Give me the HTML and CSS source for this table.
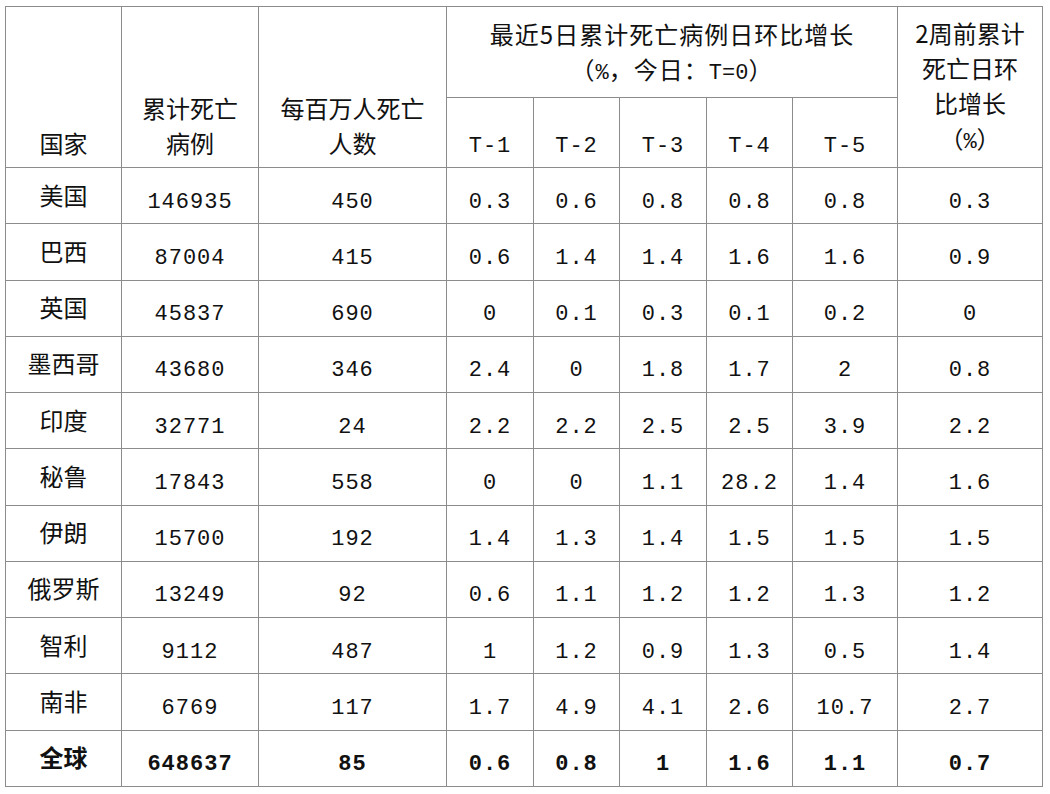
FILE: index.html
```html
<!DOCTYPE html>
<html lang="zh">
<head>
<meta charset="utf-8">
<link rel="stylesheet" href="styles.css">
</head>
<body>
<table class="deaths">
  <colgroup>
    <col class="c-country">
    <col class="c-total">
    <col class="c-permil">
    <col class="c-t1">
    <col class="c-t2">
    <col class="c-t3">
    <col class="c-t4">
    <col class="c-t5">
    <col class="c-2w">
  </colgroup>
  <thead>
    <tr class="h1">
      <th rowspan="2">国家</th>
      <th rowspan="2">累计死亡<br>病例</th>
      <th rowspan="2">每百万人死亡<br>人数</th>
      <th colspan="5" class="wide">最近5日累计死亡病例日环比增长<br>（<span class="mono">%</span>，今日：<span class="mono">T=0</span>）</th>
      <th rowspan="2">2周前累计<br>死亡日环<br>比增长<br>（<span class="mono">%</span>）</th>
    </tr>
    <tr class="h2">
      <th class="mono">T-1</th>
      <th class="mono">T-2</th>
      <th class="mono">T-3</th>
      <th class="mono">T-4</th>
      <th class="mono">T-5</th>
    </tr>
  </thead>
  <tbody>
    <tr><td class="name">美国</td><td>146935</td><td>450</td><td>0.3</td><td>0.6</td><td>0.8</td><td>0.8</td><td>0.8</td><td>0.3</td></tr>
    <tr><td class="name">巴西</td><td>87004</td><td>415</td><td>0.6</td><td>1.4</td><td>1.4</td><td>1.6</td><td>1.6</td><td>0.9</td></tr>
    <tr><td class="name">英国</td><td>45837</td><td>690</td><td>0</td><td>0.1</td><td>0.3</td><td>0.1</td><td>0.2</td><td>0</td></tr>
    <tr><td class="name">墨西哥</td><td>43680</td><td>346</td><td>2.4</td><td>0</td><td>1.8</td><td>1.7</td><td>2</td><td>0.8</td></tr>
    <tr><td class="name">印度</td><td>32771</td><td>24</td><td>2.2</td><td>2.2</td><td>2.5</td><td>2.5</td><td>3.9</td><td>2.2</td></tr>
    <tr><td class="name">秘鲁</td><td>17843</td><td>558</td><td>0</td><td>0</td><td>1.1</td><td>28.2</td><td>1.4</td><td>1.6</td></tr>
    <tr><td class="name">伊朗</td><td>15700</td><td>192</td><td>1.4</td><td>1.3</td><td>1.4</td><td>1.5</td><td>1.5</td><td>1.5</td></tr>
    <tr><td class="name">俄罗斯</td><td>13249</td><td>92</td><td>0.6</td><td>1.1</td><td>1.2</td><td>1.2</td><td>1.3</td><td>1.2</td></tr>
    <tr><td class="name">智利</td><td>9112</td><td>487</td><td>1</td><td>1.2</td><td>0.9</td><td>1.3</td><td>0.5</td><td>1.4</td></tr>
    <tr><td class="name">南非</td><td>6769</td><td>117</td><td>1.7</td><td>4.9</td><td>4.1</td><td>2.6</td><td>10.7</td><td>2.7</td></tr>
    <tr class="total"><td class="name">全球</td><td>648637</td><td>85</td><td>0.6</td><td>0.8</td><td>1</td><td>1.6</td><td>1.1</td><td>0.7</td></tr>
  </tbody>
</table>
</body>
</html>
```
FILE: styles.css
```css
html, body {
  background: #ffffff;
}
body {
  margin: 6px 5px;
  color: #111;
  font-family: "Noto Sans CJK SC", "Noto Sans", sans-serif;
}
.deaths {
  border-collapse: collapse;
  table-layout: fixed;
  width: 1037px;
}
.c-country { width: 116px; }
.c-total { width: 137px; }
.c-permil { width: 188px; }
.c-t1 { width: 87px; }
.c-t2 { width: 86px; }
.c-t3 { width: 87px; }
.c-t4 { width: 86px; }
.c-t5 { width: 105px; }
.c-2w { width: 145px; }

.deaths th,
.deaths td {
  border: 1px solid #8c8c8c;
  text-align: center;
  padding: 0;
}
.deaths th {
  font-weight: normal;
  font-size: 24px;
  line-height: 35px;
  vertical-align: bottom;
  padding-bottom: 7px;
}
.deaths th.wide {
  letter-spacing: 1px;
  padding-bottom: 6px;
}
.h1 { height: 91px; }
.h2 { height: 70px; }
.h2 th {
  padding-bottom: 3px;
}
.mono,
.deaths td {
  font-family: "Liberation Mono", "DejaVu Sans Mono", monospace;
}
.deaths th.mono {
  font-size: 22px;
  letter-spacing: 1px;
}
span.mono {
  font-size: 22px;
  letter-spacing: 0;
}
.deaths tbody tr {
  height: 56.27px;
}
.deaths td {
  font-size: 22px;
  letter-spacing: 1px;
  vertical-align: middle;
  padding-top: 14px;
  line-height: 26px;
}
.deaths td.name {
  font-family: "Noto Sans CJK SC", "Noto Sans", sans-serif;
  font-size: 24px;
  letter-spacing: 0;
  padding-top: 0;
  padding-bottom: 2px;
}
.total td {
  font-weight: bold;
}
```
